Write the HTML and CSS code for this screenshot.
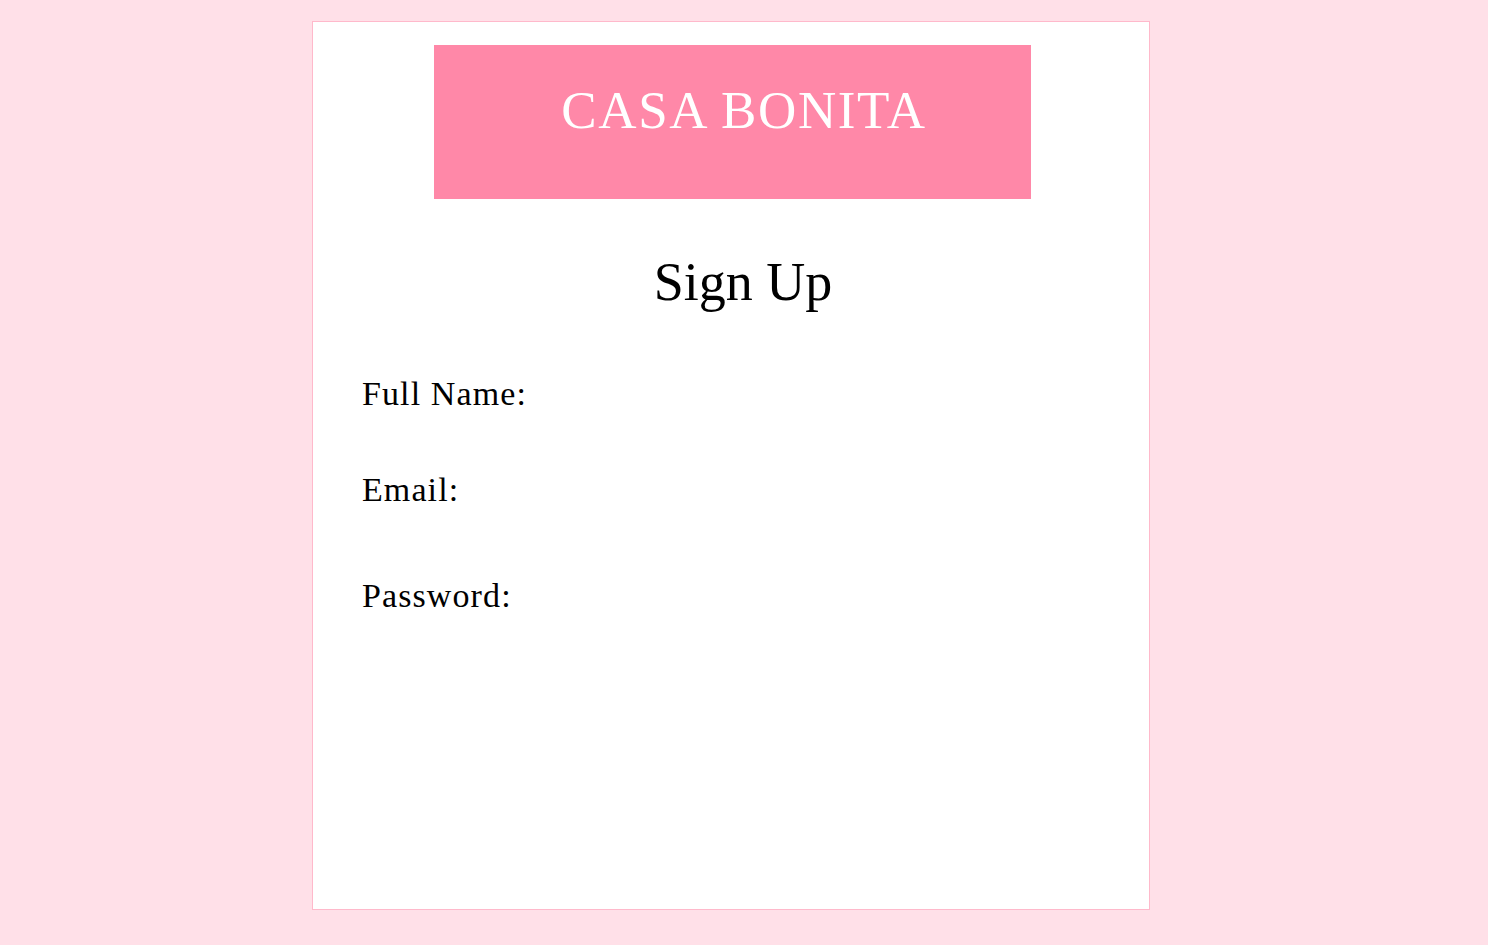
FILE: index.html
```html
<!DOCTYPE html>
<html lang="en">
<head>
<meta charset="utf-8">
<title>Casa Bonita - Sign Up</title>
<link rel="stylesheet" href="styles.css">
</head>
<body>
  <main class="card">
    <header class="brand">
      <h1 class="brand-title">CASA BONITA</h1>
    </header>
    <h2 class="page-title">Sign Up</h2>
    <form class="form">
      <label class="field field-name">Full Name:</label>
      <label class="field field-email">Email:</label>
      <label class="field field-password">Password:</label>
    </form>
  </main>
</body>
</html>
```
FILE: styles.css
```css
html, body {
  margin: 0;
  padding: 0;
}
body {
  background: #ffe0e8;
  font-family: "Liberation Serif", "Times New Roman", serif;
  color: #000;
  padding-top: 21px;
  min-height: 945px;
  box-sizing: border-box;
}
.card {
  width: 836px;
  height: 887px;
  margin-left: 312px;
  background: #ffffff;
  border: 1px solid #ffb9cb;
  display: flex;
  flex-direction: column;
}
.brand {
  margin: 23px 0 0 121px;
  width: 597px;
  height: 154px;
  box-sizing: border-box;
  background: #ff88a8;
  padding: 39px 0 0 23px;
}
.brand-title {
  margin: 0;
  font-weight: normal;
  font-size: 53px;
  line-height: 1;
  letter-spacing: 1.6px;
  color: #ffffff;
  text-align: center;
}
.page-title {
  margin: 56px 0 0 0;
  padding-left: 24px;
  font-weight: normal;
  font-size: 54px;
  line-height: 1;
  text-align: center;
}
.form {
  display: flex;
  flex-direction: column;
  padding-left: 49px;
}
.field {
  display: block;
  font-size: 34px;
  line-height: 1;
  letter-spacing: 1.1px;
}
.field-name { margin-top: 68px; }
.field-email { margin-top: 62px; }
.field-password { margin-top: 72px; }
```
